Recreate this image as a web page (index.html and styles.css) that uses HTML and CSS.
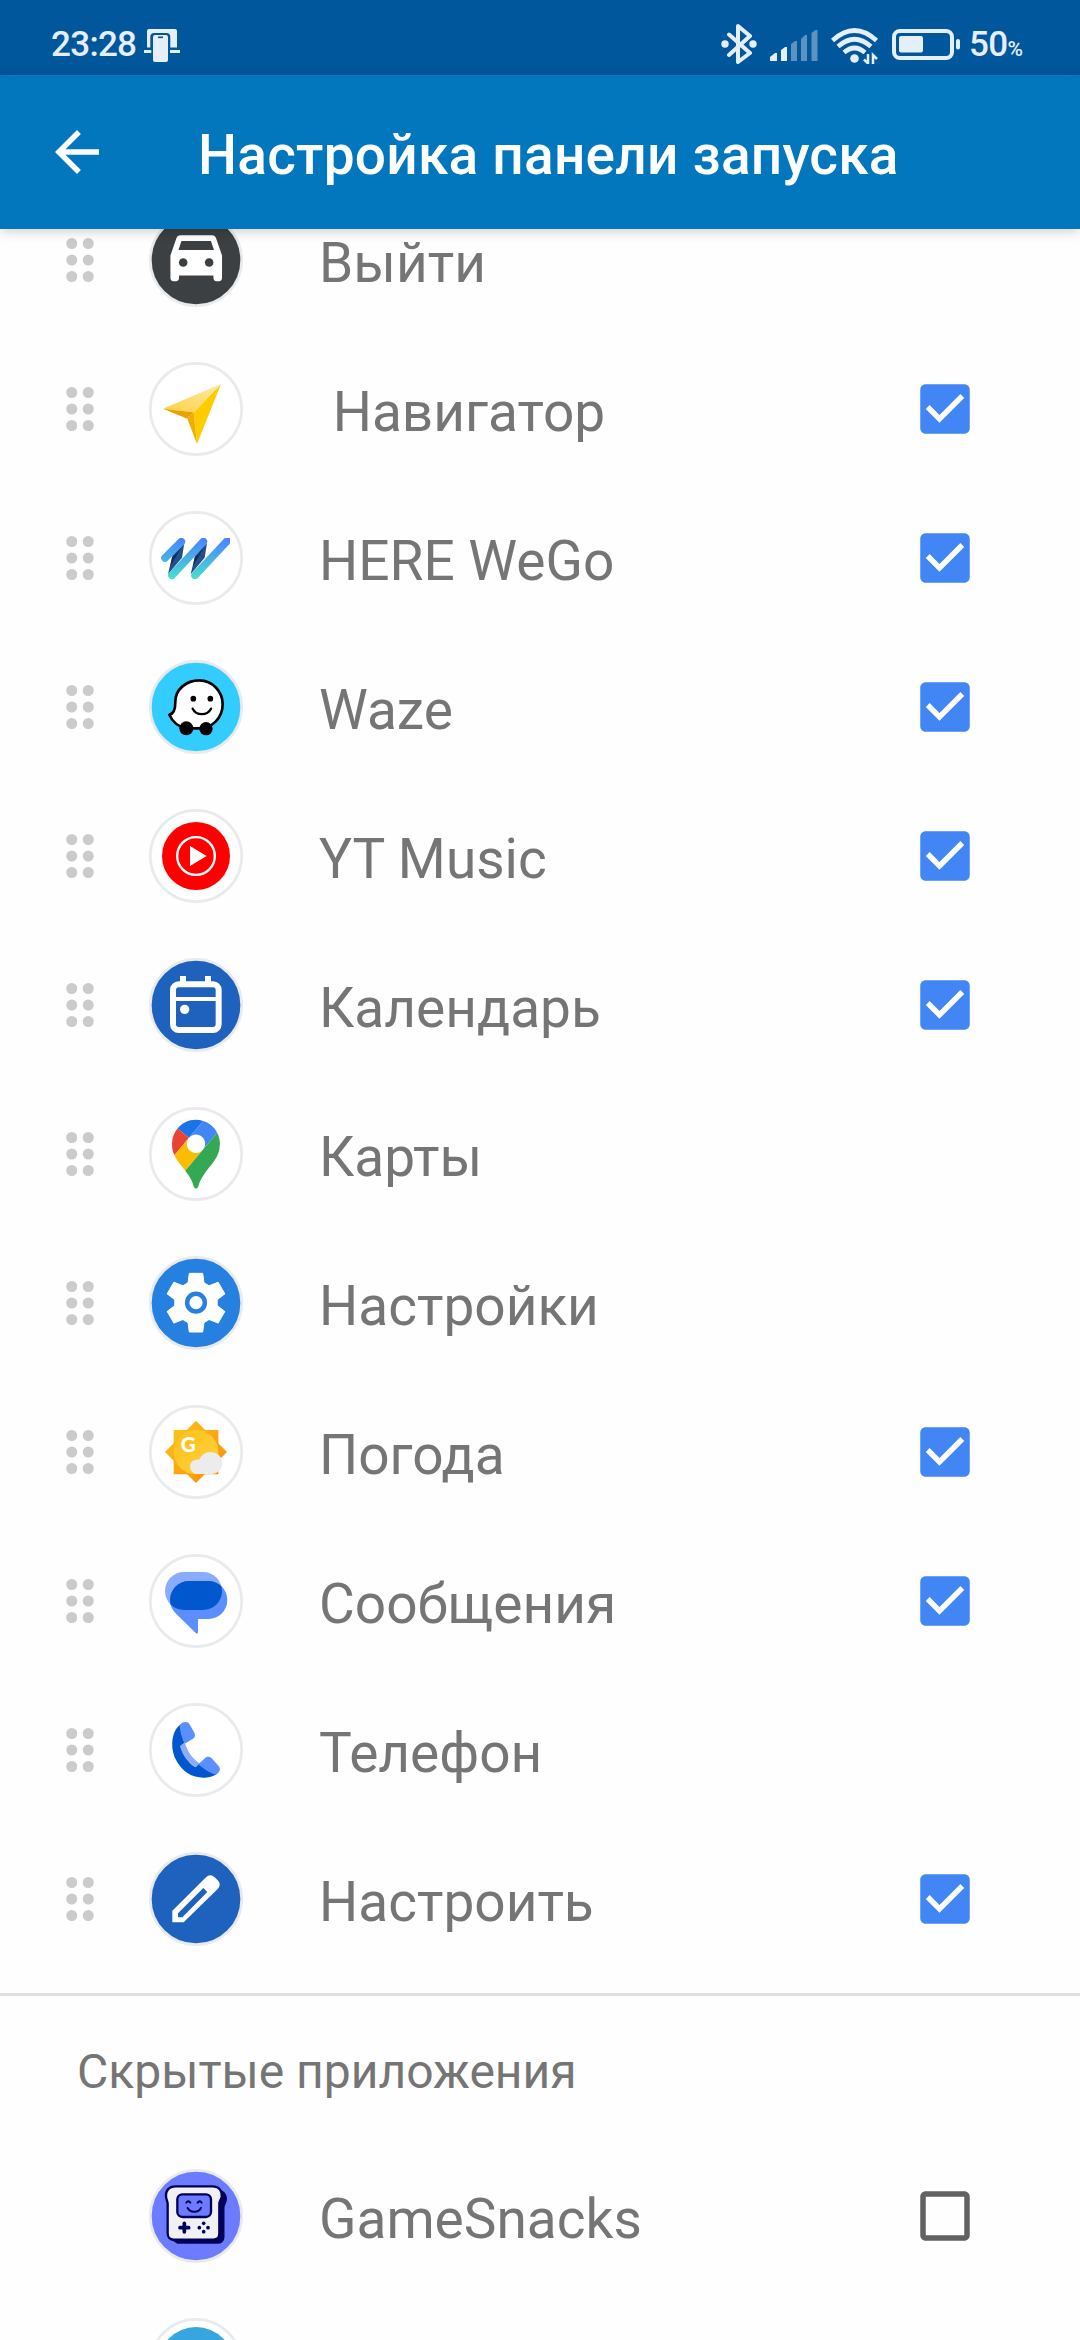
FILE: index.html
```html
<!DOCTYPE html>
<html lang="ru">
<head>
    <meta charset="UTF-8">
    <meta name="viewport" content="width=device-width, initial-scale=1.0">
    <title>Настройка панели запуска</title>
    <link rel="stylesheet" href="styles.css">
</head>
<body>

<!-- Shared icons -->
<svg class="sprite" width="0" height="0">
    <symbol id="drag" viewBox="0 0 24 24">
        <g fill="#cbcbcb">
            <circle cx="9" cy="6" r="2"/><circle cx="15" cy="6" r="2"/>
            <circle cx="9" cy="12" r="2"/><circle cx="15" cy="12" r="2"/>
            <circle cx="9" cy="18" r="2"/><circle cx="15" cy="18" r="2"/>
        </g>
    </symbol>
    <symbol id="checked" viewBox="0 0 24 24">
        <path fill="#4285f4" d="M19 3H5c-1.11 0-2 .9-2 2v14c0 1.1.89 2 2 2h14c1.11 0 2-.9 2-2V5c0-1.1-.89-2-2-2zm-9 14l-5-5 1.41-1.41L10 14.17l7.59-7.59L19 8l-9 9z"/>
    </symbol>
    <symbol id="unchecked" viewBox="0 0 24 24">
        <path fill="#616161" d="M19 5v14H5V5h14m0-2H5c-1.1 0-2 .9-2 2v14c0 1.1.9 2 2 2h14c1.1 0 2-.9 2-2V5c0-1.1-.9-2-2-2z"/>
    </symbol>
</svg>

<div class="statusbar">
    <span class="time">23:28</span>
    <svg class="ic-car" width="36" height="34" viewBox="0 0 36 34">
        <path fill="#e6eef8" d="M3 18.500V2q0-2 2-2h26q2 0 2 2v16.500h-6.700V8q0-4-4-4h-12q-4 0-4 4v10.500zM0 21h7.300v3H0zM26 21h10v3H26z"/>
        <path fill="#e6eef8" d="M9 8q0-2 2-2h11q2 0 2 2v23q0 2-2 2H11q-2 0-2-2z"/>
        <path stroke="#00579c" stroke-width="1.600" d="M14 8.300h5"/>
    </svg>
    <span class="spacer"></span>
    <svg class="ic-bt" width="36" height="40" viewBox="0 0 36 40">
        <path fill="none" stroke="#e6eef8" stroke-width="4" stroke-linejoin="round" stroke-linecap="round" d="M8 10.500L29 29 17 38V2l12 10L8 31"/>
        <circle cx="4" cy="20" r="3.700" fill="#e6eef8"/><circle cx="32" cy="20" r="3.700" fill="#e6eef8"/>
    </svg>
    <svg class="ic-signal" width="48" height="31" viewBox="0 0 48 31">
        <g fill="#e6eef8">
            <path d="M0 31v-4l5-4h2v8zM11 31V20l4-3h2v14z"/>
            <path opacity=".4" d="M21 31V14l4-3h2v20zM31 31V9l4-4h2v26zM41.500 31V3l4-3h2v31z"/>
        </g>
    </svg>
    <svg class="ic-wifi" width="48" height="36" viewBox="0 0 48 36">
        <g fill="none" stroke="#e6eef8" stroke-width="4.600">
            <path d="M1.500 12.500Q23.500-7.500 45.500 12.500"/>
            <path d="M7 18.500Q23.500 4 40 18.500"/>
            <path d="M13 24.500Q23.500 15.500 34 24.500"/>
        </g>
        <circle cx="23.500" cy="30.500" r="4.300" fill="#e6eef8"/>
        <path fill="none" stroke="#e6eef8" stroke-width="2.500" d="M37 26v9.500l-4-4M42 36V27l4 4"/>
    </svg>
    <svg class="ic-battery" width="68" height="31" viewBox="0 0 68 31">
        <rect x="2" y="2" width="58" height="27" rx="6" fill="none" stroke="#e6eef8" stroke-width="4"/>
        <rect x="7" y="7" width="24" height="16.500" rx="2" fill="#e6eef8"/>
        <rect x="64" y="10" width="4" height="10.500" rx="2" fill="#e6eef8"/>
    </svg>
    <span class="percent">50<small>%</small></span>
</div>

<header class="appbar">
    <svg class="back" viewBox="0 0 24 24"><path fill="#fff" d="M20 11H7.830l5.590-5.590L12 4l-8 8 8 8 1.410-1.410L7.830 13H20v-2z"/></svg>
    <h1>Настройка панели запуска</h1>
</header>

<main>
    <ul class="apps">
        <li class="row">
            <svg class="drag"><use href="#drag"/></svg>
            <svg class="app-icon" viewBox="0 0 282 282">
                <circle class="ring" cx="141" cy="141" r="137" fill="#3c4043"/>
                <g transform="translate(38.500 32.600) scale(8.600)">
                    <path fill="#fff" d="M18.920 5.010C18.720 4.420 18.160 4 17.500 4h-11c-.66 0-1.210.42-1.420 1.010L3 11v8c0 .55.45 1 1 1h1c.55 0 1-.45 1-1v-1h12v1c0 .55.45 1 1 1h1c.55 0 1-.45 1-1v-8z"/>
                    <path fill="#3c4043" d="M6.850 6h10.290l1.050 3.100H5.800z"/>
                    <circle cx="7.450" cy="13.500" r="1.500" fill="#3c4043"/><circle cx="16.500" cy="13.500" r="1.500" fill="#3c4043"/>
                </g>
            </svg>
            <span class="name">Выйти</span>
        </li>
        <li class="row">
            <svg class="drag"><use href="#drag"/></svg>
            <svg class="app-icon" viewBox="0 0 282 282">
                <defs>
                    <linearGradient id="nav" x1="0" y1="1" x2="1" y2="0"><stop offset="0" stop-color="#ffd040"/><stop offset="1" stop-color="#ffe9a8"/></linearGradient>
                </defs>
                <circle class="ring" cx="141" cy="141" r="137" fill="#fff"/>
                <path fill="#fc0" d="M216 66L144 246 134 151z"/>
                <path fill="url(#nav)" d="M216 66L42 140l92 11z"/>
                <path fill="#e6a400" d="M42 140l92 11-19 19z"/>
                <path fill="#efae00" d="M134 151l10 95-29-76z"/>
            </svg>
            <span class="name">&nbsp;Навигатор</span>
            <svg class="check"><use href="#checked"/></svg>
        </li>
        <li class="row">
            <svg class="drag"><use href="#drag"/></svg>
            <svg class="app-icon" viewBox="0 0 282 282">
                <defs>
                    <linearGradient id="here" gradientUnits="userSpaceOnUse" x1="0" y1="85" x2="0" y2="200"><stop offset="0" stop-color="#4a85ff"/><stop offset="1" stop-color="#48dccf"/></linearGradient>
                    <clipPath id="hereClip"><path d="M0 81h243v124H0z"/></clipPath>
                </defs>
                <circle class="ring" cx="141" cy="141" r="137" fill="#fff"/>
                <path fill="#234f8c" d="M106 96l-35 34-14 60 42-50zM174 96l-35 34-14 60 42-50z"/>
                <path fill="#0e2f5a" d="M98 108l-29 32-5 26zM166 108l-29 32-5 26z"/>
                <g clip-path="url(#hereClip)" fill="none" stroke="url(#here)" stroke-width="23" stroke-linecap="round">
                    <path d="M97 92L48 141M163 92L69 193M243 81L138 193"/>
                </g>
            </svg>
            <span class="name">HERE WeGo</span>
            <svg class="check"><use href="#checked"/></svg>
        </li>
        <li class="row">
            <svg class="drag"><use href="#drag"/></svg>
            <svg class="app-icon" viewBox="0 0 282 282">
                <circle class="ring" cx="141" cy="141" r="137" fill="#3cf"/>
                <path fill="#fff" stroke="#000" stroke-width="8" stroke-linejoin="round" d="M79 125c0-37 33-64 72-64s70 33 70 72c0 42-33 72-71 72h-38c-22-4-42-20-51-41 13-2 18-13 18-39z"/>
                <circle cx="112" cy="205" r="21"/><circle cx="171" cy="206" r="20"/>
                <circle cx="133" cy="116" r="8.500"/><circle cx="184" cy="116" r="8.500"/>
                <path fill="none" stroke="#000" stroke-width="7" stroke-linecap="round" d="M131 146c11 22 44 22 55 0"/>
            </svg>
            <span class="name">Waze</span>
            <svg class="check"><use href="#checked"/></svg>
        </li>
        <li class="row">
            <svg class="drag"><use href="#drag"/></svg>
            <svg class="app-icon" viewBox="0 0 282 282">
                <circle class="ring" cx="141" cy="141" r="137" fill="#fff"/>
                <circle cx="141" cy="141" r="102" fill="#f00"/>
                <circle cx="141" cy="141" r="56.500" fill="none" stroke="#fff" stroke-width="7"/>
                <path fill="#fff" d="M123 111v60l50-30z"/>
            </svg>
            <span class="name">YT Music</span>
            <svg class="check"><use href="#checked"/></svg>
        </li>
        <li class="row">
            <svg class="drag"><use href="#drag"/></svg>
            <svg class="app-icon" viewBox="0 0 282 282">
                <circle class="ring" cx="141" cy="141" r="137" fill="#1f62be"/>
                <rect x="72" y="79" width="137" height="137" rx="17" fill="none" stroke="#fff" stroke-width="18"/>
                <path fill="#fff" d="M93 54h18v24H93zM168 54h18v24h-18zM72 117h137v12H72z"/>
                <circle cx="107" cy="154" r="14" fill="#fff"/>
            </svg>
            <span class="name">Календарь</span>
            <svg class="check"><use href="#checked"/></svg>
        </li>
        <li class="row">
            <svg class="drag"><use href="#drag"/></svg>
            <svg class="app-icon" viewBox="0 0 282 282">
                <circle class="ring" cx="141" cy="141" r="137" fill="#fff"/>
                <g transform="translate(69 38.500) scale(1.555)">
                    <path fill="#1a73e8" d="M60.200 2.200C55.800.8 51 0 46.100 0 32 0 19.300 6.400 10.800 16.500l21.800 18.300z"/>
                    <path fill="#ea4335" d="M10.800 16.500C4.100 24.500 0 34.900 0 46.100c0 8.700 1.700 15.700 4.600 22l28-33.300z"/>
                    <path fill="#4285f4" d="M46.200 28.500c9.800 0 17.700 7.900 17.700 17.700 0 4.300-1.600 8.300-4.200 11.400 0 0 13.900-16.600 27.500-32.700-5.600-10.800-15.300-19-27-22.700L32.600 34.800c3.300-3.800 8.100-6.300 13.600-6.300"/>
                    <path fill="#fbbc04" d="M46.200 63.800c-9.800 0-17.700-7.900-17.700-17.700 0-4.300 1.500-8.300 4.100-11.300l-28 33.300c4.800 10.600 12.800 19.200 21 29.900l34.100-40.500c-3.300 3.900-8.100 6.300-13.500 6.300"/>
                    <path fill="#34a853" d="M59.100 109.200c15.400-24.100 33.300-35 33.300-63 0-7.700-1.900-14.900-5.200-21.300L25.600 98c2.600 3.400 5.300 7.300 7.900 11.300 9.400 14.500 6.800 23.100 12.800 23.100s3.400-8.700 12.800-23.200"/>
                </g>
            </svg>
            <span class="name">Карты</span>
        </li>
        <li class="row">
            <svg class="drag"><use href="#drag"/></svg>
            <svg class="app-icon" viewBox="0 0 282 282">
                <circle class="ring" cx="141" cy="141" r="137" fill="#2680e0"/>
                <g transform="translate(141 140)">
                    <g fill="#fff" stroke="#fff" stroke-width="3" stroke-linejoin="round">
                        <circle r="64"/>
                        <path id="tooth" d="M-20-88h40l5 36v104l-5 36h-40l-5-36V-52z"/>
                        <use href="#tooth" transform="rotate(60)"/>
                        <use href="#tooth" transform="rotate(120)"/>
                    </g>
                    <circle r="26.500" fill="none" stroke="#2680e0" stroke-width="13.500"/>
                </g>
            </svg>
            <span class="name">Настройки</span>
        </li>
        <li class="row">
            <svg class="drag"><use href="#drag"/></svg>
            <svg class="app-icon" viewBox="0 0 282 282">
                <defs>
                    <linearGradient id="sun" x1="0" y1="0" x2="1" y2="1"><stop offset="0" stop-color="#fcc419"/><stop offset="1" stop-color="#fd8a08"/></linearGradient>
                    <linearGradient id="disc" x1="0" y1="0" x2="1" y2="1"><stop offset="0" stop-color="#fcc01c"/><stop offset="1" stop-color="#ffd23e"/></linearGradient>
                </defs>
                <circle class="ring" cx="141" cy="141" r="137" fill="#fff"/>
                <path fill="url(#sun)" d="M74 75h134v133H74z"/>
                <path fill="url(#sun)" d="M141 47l93 94-93 93-93-93z"/>
                <circle cx="141" cy="141" r="67" fill="url(#disc)"/>
                <text class="g" x="118" y="140" text-anchor="middle">G</text>
                <path fill="#ececec" d="M144 207a22 22 0 0 1-21-22c0-14 12-23 28-21 6-14 18-23 34-23 20 0 35 15 35 33s-14 33-32 33z"/>
            </svg>
            <span class="name">Погода</span>
            <svg class="check"><use href="#checked"/></svg>
        </li>
        <li class="row">
            <svg class="drag"><use href="#drag"/></svg>
            <svg class="app-icon" viewBox="0 0 282 282">
                <defs>
                    <clipPath id="bubble"><rect x="48" y="54" width="171" height="114" rx="57"/></clipPath>
                </defs>
                <circle class="ring" cx="141" cy="141" r="137" fill="#fff"/>
                <rect x="48" y="54" width="171" height="114" rx="57" fill="#8aabff"/>
                <path fill="#5b8fff" d="M120 81h58a57 57 0 0 1 0 114h-31v40q-1 7-6 3L82 180q-19-18-19-42a57 57 0 0 1 57-57z"/>
                <rect x="63" y="81" width="172" height="114" rx="57" fill="#0057ce" clip-path="url(#bubble)"/>
            </svg>
            <span class="name">Сообщения</span>
            <svg class="check"><use href="#checked"/></svg>
        </li>
        <li class="row">
            <svg class="drag"><use href="#drag"/></svg>
            <svg class="app-icon" viewBox="0 0 282 282">
                <circle class="ring" cx="141" cy="141" r="137" fill="#fff"/>
                <path fill="#8aabff" d="M92 128l16-7c7 23 20 43 42 60l-10 11c-22-14-39-36-48-64z"/>
                <path fill="#0057ce" d="M93 66c-26 19-30 69-13 103 20 40 52 56 86 55 18 0 34-7 40-13l-55-30-11 12c-20-11-40-37-47-64l13-9z"/>
                <path fill="#5b8fff" d="M92 66c6-7 12-10 20-9 5 1 8 4 11 9l13 23c4 8 2 14-4 18l-25 15c-9-18-14-36-15-56zM148 184l18-17c7-7 15-7 22-1l20 22c8 9 5 17-3 23-4 3-8 3-12 2-17-8-31-16-45-29z"/>
            </svg>
            <span class="name">Телефон</span>
        </li>
        <li class="row">
            <svg class="drag"><use href="#drag"/></svg>
            <svg class="app-icon" viewBox="0 0 282 282">
                <circle class="ring" cx="141" cy="141" r="137" fill="#1f62be"/>
                <path fill="#fff" fill-rule="evenodd" d="M70 211v-35L171 76c8-8 18-8 26 0l9 9c8 8 8 18 0 26L104 211zM163 108l-76 76v12h13l75-76z"/>
            </svg>
            <span class="name">Настроить</span>
            <svg class="check"><use href="#checked"/></svg>
        </li>
    </ul>

    <h2 class="section">Скрытые приложения</h2>

    <ul class="apps-hidden">
        <li class="row">
            <span class="drag"></span>
            <svg class="app-icon" viewBox="0 0 282 282">
                <circle class="ring" cx="141" cy="141" r="137" fill="#6c7bff"/>
                <path fill="#00005a" stroke="#00005a" stroke-width="7" d="M91 64h110c23 0 31 16 29 30-2 10-7 12-7 22v88c0 10-7 17-17 17H86L60 204z"/>
                <path fill="#f1f1f4" stroke="#00005a" stroke-width="7" d="M80 52h110c22 0 30 16 28 31-2 10-7 13-7 22v88c0 11-7 19-18 19H74c-11 0-18-8-18-19v-88c0-9-4-12-5-22-2-17 8-31 29-31z"/>
                <rect x="85" y="76" width="101" height="68" rx="15" fill="#6c7bff" stroke="#00005a" stroke-width="7"/>
                <g fill="none" stroke="#00005a" stroke-width="6" stroke-linecap="round">
                    <path d="M112 101q6-8 12 0M146 101q6-8 12 0M116 117c8 15 32 15 40 0"/>
                    <path stroke-width="11" d="M93 176h26M106 163v26"/>
                </g>
                <g fill="#00005a">
                    <circle cx="164" cy="163" r="5.500"/><circle cx="151" cy="176" r="5.500"/>
                    <circle cx="177" cy="176" r="5.500"/><circle cx="164" cy="188" r="5.500"/>
                </g>
            </svg>
            <span class="name">GameSnacks</span>
            <svg class="check"><use href="#unchecked"/></svg>
        </li>
        <li class="row">
            <span class="drag"></span>
            <svg class="app-icon" viewBox="0 0 282 282">
                <circle class="ring" cx="141" cy="141" r="137" fill="#fff"/>
                <circle cx="141" cy="141" r="114" fill="#36a5e0"/>
            </svg>
        </li>
    </ul>
</main>

</body>
</html>
```
FILE: styles.css
```css
* {
    margin: 0;
    padding: 0;
    box-sizing: border-box;
    font-family: Roboto, "Noto Sans", sans-serif;
}

body {
    width: 1080px;
    height: 2340px;
    overflow: hidden;
    display: flex;
    flex-direction: column;
    background: #fefefe;
}

.sprite {
    display: none;
}

/* Status bar */
.statusbar {
    display: flex;
    align-items: flex-start;
    height: 75px;
    flex: none;
    padding: 0 58px 0 51px;
    background: #00579c;
    color: #e6eef8;
}

.statusbar svg {
    flex: none;
}

.time,
.percent {
    font-size: 35px;
    font-weight: 500;
    line-height: 40px;
    margin-top: 25px;
    letter-spacing: -0.7px;
    white-space: nowrap;
}

.time {
    width: 93px;
}

.ic-car {
    margin-top: 29px;
}

.spacer {
    flex: 1;
}

.ic-bt {
    margin: 24px 13px 0 0;
}

.ic-signal {
    margin: 30px 13px 0 0;
}

.ic-wifi {
    margin: 28px 13px 0 0;
}

.ic-battery {
    margin: 29px 9px 0 0;
}

.percent {
    width: 53px;
}

.percent small {
    font-size: 21px;
}

/* App bar */
.appbar {
    position: relative;
    z-index: 1;
    display: flex;
    align-items: center;
    height: 154px;
    flex: none;
    padding-left: 44px;
    background: #0277bd;
    box-shadow: 0 2px 12px rgba(0, 0, 0, 0.2);
}

.back {
    width: 66px;
    height: 66px;
}

.appbar h1 {
    margin-left: 88px;
    padding-top: 6px;
    font-size: 55px;
    font-weight: 500;
    line-height: 64px;
    letter-spacing: 0.24px;
    color: #fff;
    white-space: nowrap;
}

/* App list */
main {
    flex: 1;
    overflow: hidden;
}

ul {
    list-style: none;
}

.apps {
    margin-top: -44px;
    padding-bottom: 20px;
    border-bottom: 3px solid #e0e0e0;
}

.row {
    display: flex;
    align-items: center;
    height: 149px;
    padding: 0 102px 0 47px;
}

.drag,
.check {
    width: 66px;
    height: 66px;
    flex: none;
}

.app-icon {
    width: 94px;
    height: 94px;
    margin: 0 76px 0 36px;
    flex: none;
}

.ring {
    stroke: #e8eaed;
    stroke-width: 8px;
}

.g {
    font-family: Lato, sans-serif;
    font-size: 62px;
    font-weight: 900;
    fill: #fff;
}

.name {
    flex: 1;
    padding-top: 6px;
    font-size: 55px;
    line-height: 64px;
    color: #757575;
    white-space: nowrap;
}

/* Hidden apps */
.section {
    height: 145px;
    padding: 3px 0 0 77px;
    font-size: 48px;
    font-weight: 400;
    line-height: 145px;
    color: #757575;
}
```
